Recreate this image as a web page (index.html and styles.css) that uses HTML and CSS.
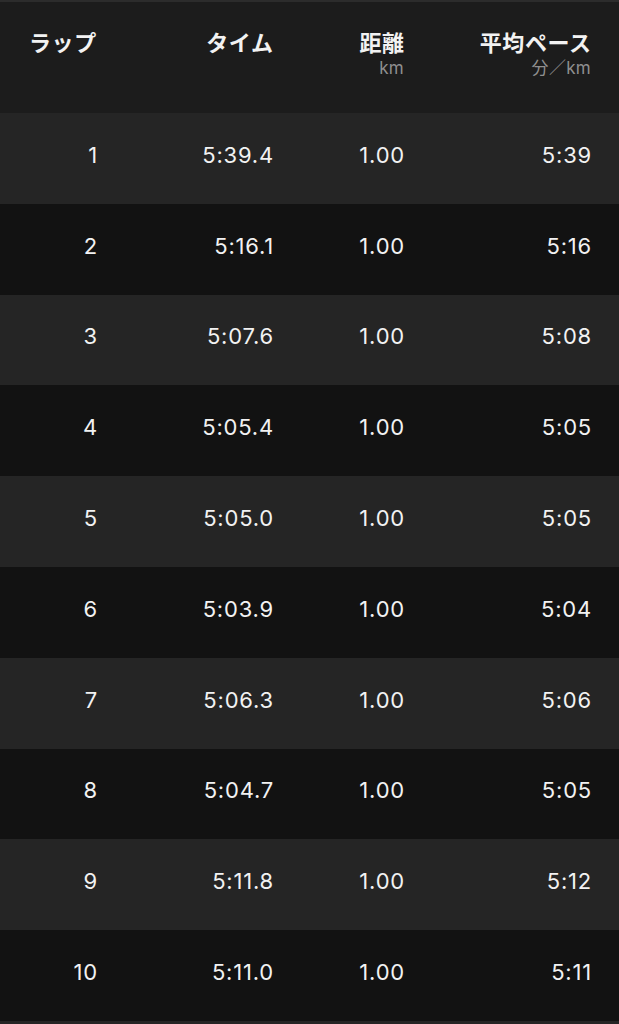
FILE: index.html
```html
<!DOCTYPE html>
<html lang="ja">
<head>
<meta charset="utf-8">
<link rel="stylesheet" href="styles.css">
</head>
<body>
<div class="table">
  <div class="head">
    <div class="hcell left"><span class="title">ラップ</span></div>
    <div class="hcell"><span class="title">タイム</span></div>
    <div class="hcell"><span class="title">距離</span><span class="unit">km</span></div>
    <div class="hcell"><span class="title">平均ペース</span><span class="unit">分／km</span></div>
  </div>
  <div class="row odd"><span>1</span><span>5:39.4</span><span>1.00</span><span>5:39</span></div>
  <div class="row even"><span>2</span><span>5:16.1</span><span>1.00</span><span>5:16</span></div>
  <div class="row odd"><span>3</span><span>5:07.6</span><span>1.00</span><span>5:08</span></div>
  <div class="row even"><span>4</span><span>5:05.4</span><span>1.00</span><span>5:05</span></div>
  <div class="row odd"><span>5</span><span>5:05.0</span><span>1.00</span><span>5:05</span></div>
  <div class="row even"><span>6</span><span>5:03.9</span><span>1.00</span><span>5:04</span></div>
  <div class="row odd"><span>7</span><span>5:06.3</span><span>1.00</span><span>5:06</span></div>
  <div class="row even"><span>8</span><span>5:04.7</span><span>1.00</span><span>5:05</span></div>
  <div class="row odd"><span>9</span><span>5:11.8</span><span>1.00</span><span>5:12</span></div>
  <div class="row even"><span>10</span><span>5:11.0</span><span>1.00</span><span>5:11</span></div>
</div>
</body>
</html>
```

FILE: styles.css
```css
html, body {
  margin: 0;
  padding: 0;
  background: #252525;
}
body {
  width: 619px;
  height: 1024px;
  overflow: hidden;
  font-family: Inter, "Noto Sans CJK JP", sans-serif;
  color: #f2f2f2;
}
.table {
  display: flex;
  flex-direction: column;
}
.head,
.row {
  display: grid;
  grid-template-columns: 68px 176px 131px 187px;
  padding: 0 28px 0 29px;
}
.head {
  border-top: 2px solid #2c2c2c;
  background: #1c1c1c;
  align-items: start;
  padding-top: 25px;
  box-sizing: border-box;
  height: 113px;
}
.hcell {
  display: flex;
  flex-direction: column;
  align-items: flex-end;
}
.hcell.left {
  align-items: flex-start;
}
.title {
  font-family: "Noto Sans CJK JP", sans-serif;
  font-weight: 700;
  font-size: 22px;
  line-height: 28px;
  letter-spacing: 0.6px;
  margin-right: -0.6px;
}
.unit {
  font-family: Inter, "Noto Sans CJK JP", sans-serif;
  font-size: 17px;
  line-height: 20px;
  color: #8f8f8f;
  letter-spacing: 0.3px;
  margin-top: 3px;
}
.row {
  height: 90.8px;
  box-sizing: border-box;
  align-items: center;
  padding-bottom: 7px;
  font-size: 22px;
  line-height: 26px;
  font-weight: 400;
  letter-spacing: 0.8px;
}
.row span {
  text-align: right;
  margin-right: -1px;
}
.odd {
  background: #252525;
}
.even {
  background: #121212;
}
```
